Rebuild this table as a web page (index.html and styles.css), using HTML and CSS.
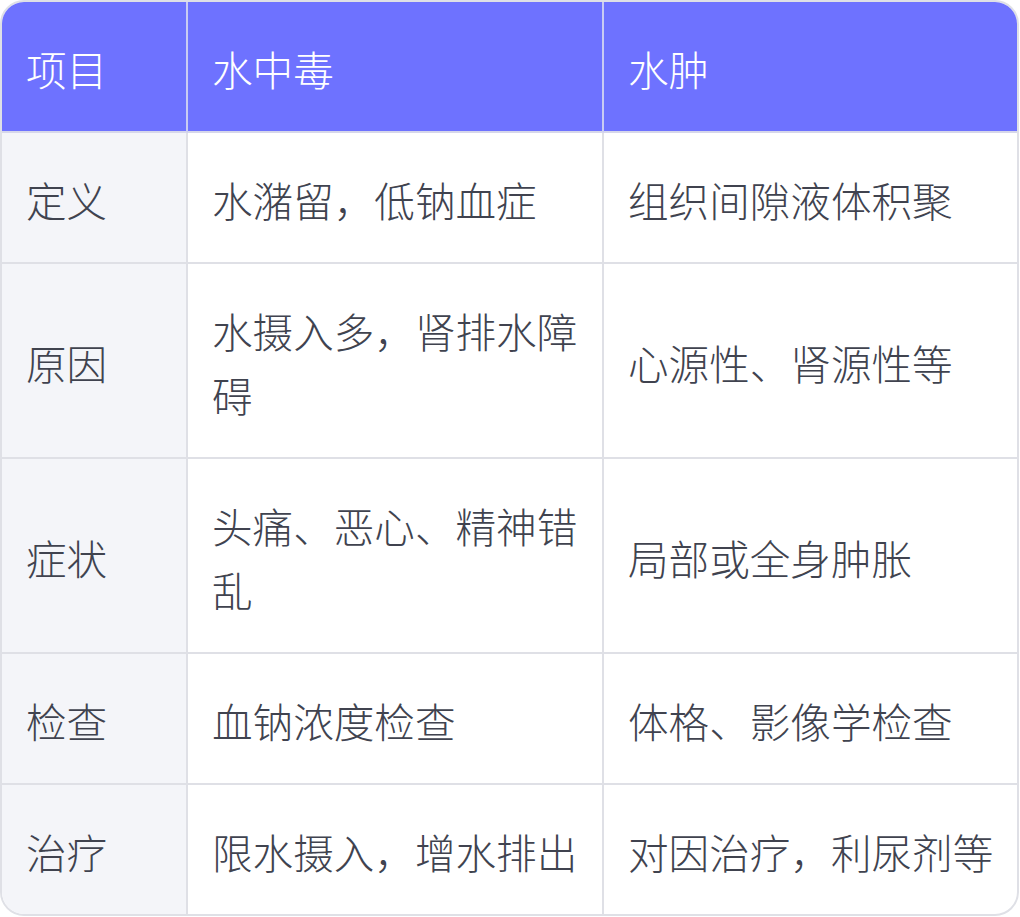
FILE: index.html
```html
<!DOCTYPE html>
<html lang="zh">
<head>
<meta charset="utf-8">
<title>水中毒 vs 水肿</title>
<link rel="stylesheet" href="styles.css">
</head>
<body>
<div class="wrap">
  <table class="cmp">
    <colgroup>
      <col class="c0">
      <col class="c1">
      <col class="c2">
    </colgroup>
    <thead>
      <tr><th>项目</th><th>水中毒</th><th>水肿</th></tr>
    </thead>
    <tbody>
      <tr><td class="key">定义</td><td>水潴留，低钠血症</td><td>组织间隙液体积聚</td></tr>
      <tr><td class="key">原因</td><td>水摄入多，肾排水障碍</td><td>心源性、肾源性等</td></tr>
      <tr><td class="key">症状</td><td>头痛、恶心、精神错乱</td><td>局部或全身肿胀</td></tr>
      <tr><td class="key">检查</td><td>血钠浓度检查</td><td>体格、影像学检查</td></tr>
      <tr><td class="key">治疗</td><td>限水摄入，增水排出</td><td>对因治疗，利尿剂等</td></tr>
    </tbody>
  </table>
</div>
</body>
</html>
```

FILE: styles.css
```css
html, body {
  margin: 0;
  padding: 0;
  background: #ffffff;
}
body {
  font-family: "Noto Sans CJK SC", "Noto Sans", sans-serif;
}
.wrap {
  box-sizing: border-box;
  width: 1019px;
  border: 2px solid #dfe0e6;
  border-radius: 24px;
  overflow: hidden;
}
.cmp {
  width: 100%;
  border-collapse: separate;
  border-spacing: 0;
  table-layout: fixed;
}
.c0 { width: 186px; }
.c1 { width: 416px; }
.cmp th,
.cmp td {
  box-sizing: border-box;
  padding: 35px 22px 30px 24px;
  font-size: 40.6px;
  line-height: 64px;
  font-weight: 300;
  text-align: left;
  vertical-align: middle;
  border-right: 2px solid #dfe0e6;
  border-bottom: 2px solid #dfe0e6;
  color: #40434f;
}
.cmp th {
  background: #6e72ff;
  color: #ffffff;
  border-right-color: #c9cbf3;
  border-bottom-color: #d6d7ea;
}
.cmp th:last-child,
.cmp td:last-child {
  border-right: none;
}
.cmp tbody tr:last-child td {
  border-bottom: none;
}
.cmp td.key {
  background: #f4f5f9;
}
```
